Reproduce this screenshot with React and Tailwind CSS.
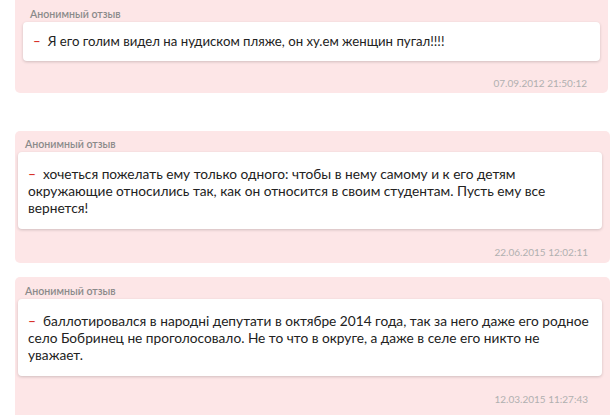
import React from "react";

const reviews = [
  {
    lines: ["Я его голим видел на нудиском пляже, он ху.ем женщин пугал!!!!"],
    date: "07.09.2012 21:50:12",
    card: "mx-[15px] w-[593px] rounded-b-[5px] pt-[8px] pb-[4px]",
    label: "pl-[15px]",
    box: "ml-[8px] mr-[8px] mt-[2px] py-[11px] text-[13.2px]",
    dateCls: "mt-[16px] pr-[21px]",
  },
  {
    lines: [
      "хочеться пожелать ему только одного: чтобы в нему самому и к его детям",
      "окружающие относились так, как он относится в своим студентам. Пусть ему все",
      "вернется!",
    ],
    date: "22.06.2015 12:02:11",
    card: "mx-[15px] mt-[38px] w-[595px] rounded-[5px] pt-[7px] pb-[5px]",
    label: "pl-[10px]",
    box: "ml-[3px] mr-[8px] mt-[2px] py-[13px] text-[13.7px]",
    dateCls: "mt-[17px] pr-[22px]",
  },
  {
    lines: [
      "баллотировался в народні депутати в октябре 2014 года, так за него даже его родное",
      "село Бобринец не проголосовало. Не то что в округе, а даже в селе его никто не",
      "уважает.",
    ],
    date: "12.03.2015 11:27:43",
    card: "mx-[15px] mt-[14px] w-[595px] rounded-t-[5px] pt-[8px] pb-[10px]",
    label: "pl-[10px]",
    box: "ml-[3px] mr-[8px] mt-[2px] py-[13px] text-[13.7px]",
    dateCls: "mt-[17px] pr-[22px]",
  },
];

export default function App() {
  return (
    <div
      className="w-[613px] h-[418px] overflow-hidden bg-white"
      style={{ fontFamily: "Lato, 'Open Sans', sans-serif" }}
    >
      {reviews.map((r, i) => (
        <div key={i} className={`bg-[#fde6e7] ${r.card}`}>
          <div
            className={`text-[10.6px] leading-[12px] font-semibold text-[#8a8a8a] ${r.label}`}
          >
            Анонимный отзыв
          </div>
          <div
            className={`bg-white rounded-[4px] shadow-[0_1px_3px_rgba(0,0,0,0.18)] px-[10px] leading-[17px] text-[#222] ${r.box}`}
          >
            {r.lines.map((line, j) => (
              <div key={j} className="whitespace-nowrap">
                {j === 0 && (
                  <span className="text-[#d8332a] font-semibold mr-[7px]">–</span>
                )}
                {line}
              </div>
            ))}
          </div>
          <div
            className={`text-right text-[10px] leading-[12px] text-[#b0b0b0] ${r.dateCls}`}
          >
            {r.date}
          </div>
        </div>
      ))}
    </div>
  );
}
